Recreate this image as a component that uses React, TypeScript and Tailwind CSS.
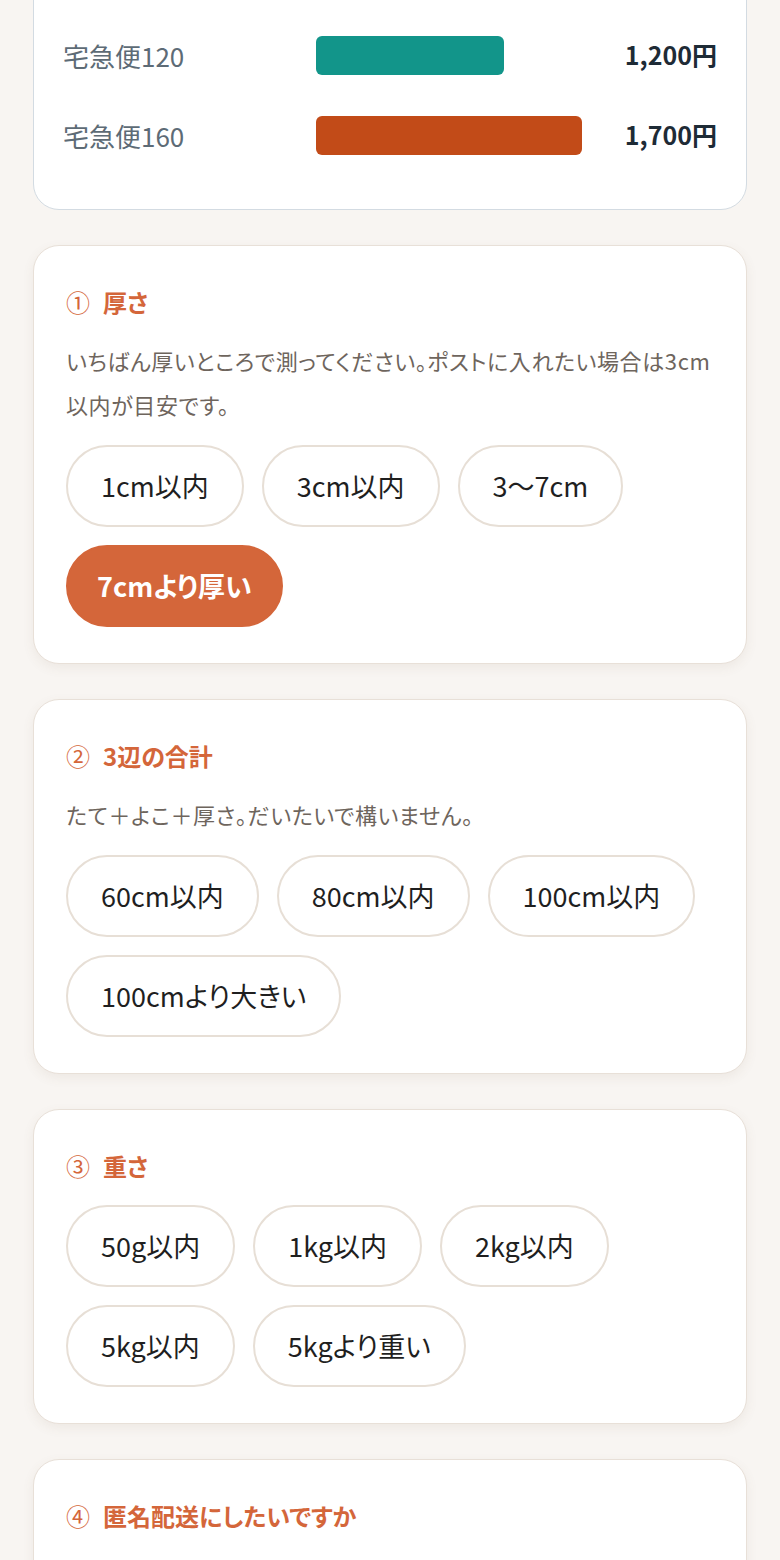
import React from "react";

const rates = [
  { name: "宅急便120", price: "1,200円", pct: 70.6, color: "bg-[#12958a]" },
  { name: "宅急便160", price: "1,700円", pct: 100, color: "bg-[#c24b18]" },
];

const questions = [
  {
    num: "①",
    title: "厚さ",
    note: "いちばん厚いところで測ってください。ポストに入れたい場合は3cm以内が目安です。",
    options: ["1cm以内", "3cm以内", "3〜7cm", "7cmより厚い"],
    selected: "7cmより厚い",
  },
  {
    num: "②",
    title: "3辺の合計",
    note: "たて＋よこ＋厚さ。だいたいで構いません。",
    options: ["60cm以内", "80cm以内", "100cm以内", "100cmより大きい"],
    selected: "",
  },
  {
    num: "③",
    title: "重さ",
    note: "",
    options: ["50g以内", "1kg以内", "2kg以内", "5kg以内", "5kgより重い"],
    selected: "",
  },
];

const Chip = ({ label, active }: { label: string; active: boolean }) => (
  <button
    className={
      active
        ? "rounded-full border-2 border-[#d4663a] bg-[#d4663a] px-[29px] py-[22px] text-[27px] leading-[34px] font-bold text-white"
        : "rounded-full border-2 border-[#e7dfd6] bg-white px-[33px] py-[22px] text-[27px] leading-[34px] text-[#1f1f1f]"
    }
  >
    {label}
  </button>
);

const Title = ({ num, text }: { num: string; text: string }) => (
  <h2 className="flex gap-[13px] text-[24px] leading-[40px] font-bold text-[#d4663a]">
    <span className="font-normal">{num}</span>
    <span>{text}</span>
  </h2>
);

const App = () => {
  return (
    <div
      className="min-h-[1560px] bg-[#f8f5f2] px-[33px] overflow-hidden [font-feature-settings:'palt']"
      style={{ fontFamily: '"Noto Sans CJK JP", "Noto Sans", sans-serif' }}
    >
      <div className="flex flex-col gap-[35px]">
        <div className="-mt-[40px] rounded-[26px] border border-[#d3dbe2] bg-white px-[29px] pt-[54px] pb-[34px]">
          {rates.map((r) => (
            <div key={r.name} className="grid h-[80px] grid-cols-[253px_266px_1fr] items-center">
              <div className="text-[26px] text-[#5d6b76]">{r.name}</div>
              <div>
                <div className={`h-[39px] rounded-[6px] ${r.color}`} style={{ width: `${r.pct}%` }} />
              </div>
              <div className="text-right text-[25px] font-bold text-[#1e2b36]">{r.price}</div>
            </div>
          ))}
        </div>

        {questions.map((q) => (
          <div
            key={q.title}
            className="rounded-[26px] border border-[#e8e0d8] bg-white px-8 py-9 shadow-[0_4px_12px_rgba(120,90,60,0.08)]"
          >
            <Title num={q.num} text={q.title} />
            {q.note && (
              <p className="mt-4 text-[22px] leading-[44px] tracking-[0.6px] text-[#6e655d]">{q.note}</p>
            )}
            <div className="mt-[19px] flex flex-wrap gap-[18px]">
              {q.options.map((o) => (
                <Chip key={o} label={o} active={o === q.selected} />
              ))}
            </div>
          </div>
        ))}

        <div className="rounded-[26px] border border-[#e8e0d8] bg-white px-8 pt-9 pb-24 shadow-[0_4px_12px_rgba(120,90,60,0.08)]">
          <Title num="④" text="匿名配送にしたいですか" />
        </div>
      </div>
    </div>
  );
};

export default App;
